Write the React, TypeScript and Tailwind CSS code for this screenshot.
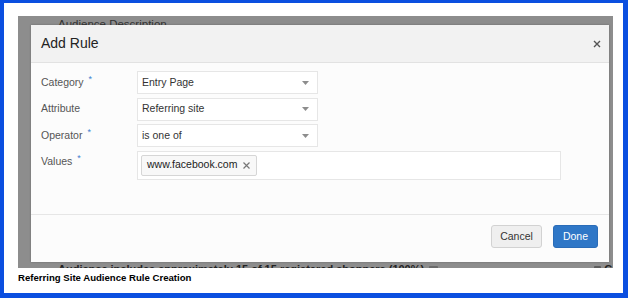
import React from 'react';

const font = { fontFamily: '"Liberation Sans", Arial, sans-serif' };

function Caret() {
  return (
    <svg width="7" height="4" viewBox="0 0 7 4" className="shrink-0">
      <path d="M0 0 H7 L3.5 4 Z" fill="#8d8d8d" />
    </svg>
  );
}

function Req() {
  return <span className="ml-[5px] -mt-[7px] text-[9px] leading-none text-[#3f7fd0]">*</span>;
}

function FieldLabel({ text, required }: { text: string; required?: boolean }) {
  return (
    <div className="w-[96px] h-[23px] shrink-0 flex items-center text-[10.5px] text-[#555]">
      {text}
      {required && <Req />}
    </div>
  );
}

function Select({ value }: { value: string }) {
  return (
    <div className="w-[181px] h-[23px] flex items-center justify-between pl-[4px] pr-[8px] bg-white border border-[#e6e6e6] text-[10.5px] text-[#333]">
      <span>{value}</span>
      <Caret />
    </div>
  );
}

export default function App() {
  return (
    <div
      style={font}
      className="w-[628px] h-[298px] bg-white border-l-4 border-t-[3px] border-r-[5px] border-b-[5px] border-[#0b4fe0] overflow-hidden"
    >
      <div className="ml-[14px] mt-[13px] w-[595px] h-[252px] bg-[#8d8d8d] relative overflow-hidden flex flex-col pl-[40px] pr-0">
        <div className="text-[11.5px] leading-[14px] mt-[1px] text-[#333]">Audience Description</div>
        <div className="mt-auto h-[5px] overflow-hidden flex items-start justify-between text-[11px] leading-[13px] font-bold text-[#222]">
          <div className="flex items-center gap-[5px]">
            Audience includes approximately 15 of 15 registered shoppers (100%)
            <span className="w-[9px] h-[8px] rounded-[1px] bg-[#6a6a6a]" />
          </div>
          <div className="flex items-center gap-[3px] -mr-[6px]">
            <span className="w-[7px] h-[8px] rounded-[1px] bg-[#5d5d5d]" />
            Co
          </div>
        </div>

        <div className="absolute left-[13px] top-[9px] w-[578px] h-[237px] bg-[#fcfcfc] flex flex-col shadow-[0_0_2px_rgba(0,0,0,0.25)]">
          <div className="h-[38px] shrink-0 bg-[#f2f2f2] border-b border-[#e2e2e2] flex items-center justify-between pl-[10px] pr-[8px]">
            <span className="text-[14px] text-[#222]">Add Rule</span>
            <svg width="8" height="8" viewBox="0 0 8 8">
              <path d="M1 1 L7 7 M7 1 L1 7" stroke="#555" strokeWidth="1.4" />
            </svg>
          </div>

          <div className="h-[152px] shrink-0 pl-[10px] pt-[8px] flex flex-col gap-[3.5px] border-b border-[#e6e6e6]">
            <div className="flex">
              <FieldLabel text="Category" required />
              <Select value="Entry Page" />
            </div>
            <div className="flex">
              <FieldLabel text="Attribute" />
              <Select value="Referring site" />
            </div>
            <div className="flex">
              <FieldLabel text="Operator" required />
              <Select value="is one of" />
            </div>
            <div className="flex items-start">
              <FieldLabel text="Values" required />
              <div className="w-[424px] h-[29px] bg-white border border-[#e6e6e6] flex items-center pl-[3px]">
                <div className="h-[21px] flex items-center gap-[6px] pl-[5px] pr-[6px] bg-[#f8f8f8] border border-[#d6d6d6] rounded-[2px] text-[10.5px] text-[#222]">
                  www.facebook.com
                  <svg width="7" height="7" viewBox="0 0 7 7">
                    <path d="M0.5 0.5 L6.5 6.5 M6.5 0.5 L0.5 6.5" stroke="#777" strokeWidth="1.2" />
                  </svg>
                </div>
              </div>
            </div>
          </div>

          <div className="flex justify-end gap-[11px] pt-[10px] pr-[11px]">
            <button className="w-[51px] h-[23px] bg-[#efefef] border border-[#d2d2d2] rounded-[3px] text-[10.5px] text-[#333]">
              Cancel
            </button>
            <button className="w-[45px] h-[23px] bg-[#2f77c7] border border-[#2a6cb8] rounded-[3px] text-[10.5px] text-white">
              Done
            </button>
          </div>
        </div>
      </div>
      <div className="ml-[14px] mt-[4px] text-[9.6px] leading-[12px] font-bold text-black">
        Referring Site Audience Rule Creation
      </div>
    </div>
  );
}
